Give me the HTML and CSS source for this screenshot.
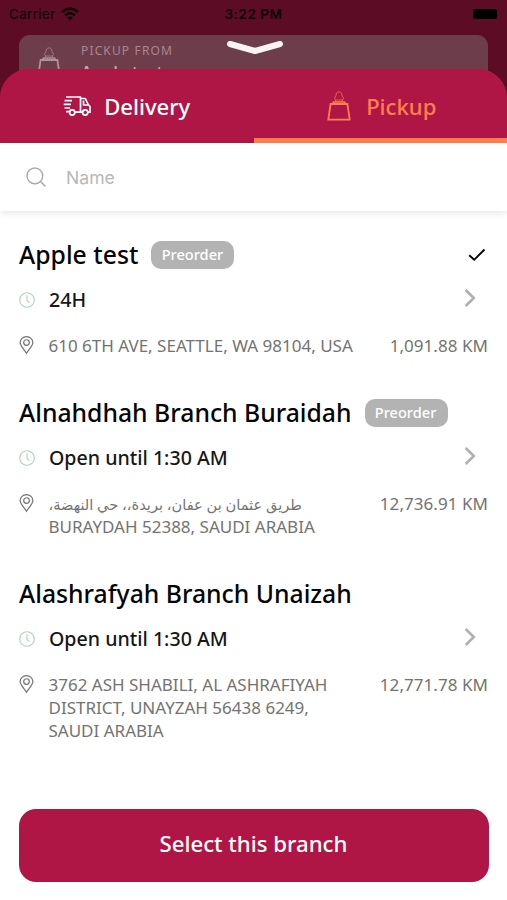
FILE: index.html
```html
<!DOCTYPE html>
<html lang="en">
<head>
<meta charset="utf-8">
<title>Choose a branch</title>
<link rel="stylesheet" href="styles.css">
</head>
<body>
<svg class="defs" width="0" height="0">
  <symbol id="bag" viewBox="0 0 24 30"><path d="M3.6 13H20.4L22.7 28.6H1.3Z" stroke-width="1.8"/><path d="M5.5 12.5L6.5 11H17.5L18.5 12.5" stroke-width="1.4"/><path d="M8.5 10.5V9L7.5 7L9 4.5L9.5 2L11 1H13L14.5 2L15 4.5L16.5 7L15.5 9V10.5M8.5 9H15.5" stroke-width=".9" opacity=".75"/></symbol>
  <symbol id="clock" viewBox="0 0 16 16"><circle cx="8" cy="8" r="7.3"/><path d="M8 3.2V8.3L10.4 11"/></symbol>
  <symbol id="pin" viewBox="0 0 16 20"><path d="M8 18.8C6 15.2 1.2 11.2 1.2 7.4A6.8 6.4 0 0 1 14.8 7.4C14.8 11.2 10 15.2 8 18.8Z"/><circle cx="8" cy="7.4" r="3"/></symbol>
  <symbol id="chevron" viewBox="0 0 12 20"><path d="M1.7 2L9.8 10L1.7 18"/></symbol>
</svg>
<div class="screen">
  <header class="status">
    <div class="carrier">Carrier
      <svg class="wifi" viewBox="0 0 18 14"><path d="M1 5.2C5.5.5 12.5.5 17 5.2M4 8.4C6.8 5.5 11.2 5.5 14 8.4" fill="none" stroke="#0b0206" stroke-width="2.6"/><path d="M6.2 10.6Q9 8.2 11.8 10.6L9 13.5Z" fill="#0b0206"/></svg>
    </div>
    <div class="time">3:22 PM</div>
    <div class="battery"></div>
  </header>
  <div class="pickup-card">
    <svg class="bag"><use href="#bag"/></svg>
    <div><div class="caption">PICKUP FROM</div><div class="current">Apple test</div></div>
  </div>
  <svg class="handle" viewBox="0 0 58 16"><path d="M4 4L29 11L54 4"/></svg>
  <main class="sheet">
    <nav class="tabs">
      <div class="tab">
        <svg class="truck" viewBox="0 0 28 20"><path d="M3 1H17.5V16.2H12M17.5 2.5H22.3L25.2 8.5L27 10.5V16.2H25M19.8 16.2H17.5M20.5 4.5V9H25M1.5 4.7H9M.7 8.3H8M1.5 12H7M3 15.7H6"/><circle cx="9.2" cy="16.5" r="2.6"/><circle cx="22.2" cy="16.5" r="2.6"/></svg>
        <span>Delivery</span>
      </div>
      <div class="tab active"><svg class="bag"><use href="#bag"/></svg><span>Pickup</span></div>
    </nav>
    <div class="search">
      <svg viewBox="0 0 22 22"><circle cx="9.3" cy="9.3" r="8.2"/><path d="M15.2 15.2L20.3 20.3"/></svg>
      <span>Name</span>
    </div>
    <div class="list">
      <section class="branch">
        <div class="title"><h2>Apple test</h2><span class="badge">Preorder</span><svg class="check" viewBox="0 0 18 14"><path d="M1.2 7.2L6.2 11.8L16.5 1.5"/></svg></div>
        <div class="hours"><svg class="clock"><use href="#clock"/></svg><span>24H</span><svg class="chevron"><use href="#chevron"/></svg></div>
        <div class="place"><svg class="pin"><use href="#pin"/></svg><p>610 6TH AVE, SEATTLE, WA 98104, USA</p><span class="distance">1,091.88 KM</span></div>
      </section>
      <section class="branch">
        <div class="title"><h2>Alnahdhah Branch Buraidah</h2><span class="badge">Preorder</span></div>
        <div class="hours"><svg class="clock"><use href="#clock"/></svg><span>Open until 1:30 AM</span><svg class="chevron"><use href="#chevron"/></svg></div>
        <div class="place"><svg class="pin"><use href="#pin"/></svg><p><bdi class="arabic" dir="rtl" lang="ar">طريق عثمان بن عفان، بريدة،، حي النهضة،</bdi><br>BURAYDAH 52388, SAUDI ARABIA</p><span class="distance">12,736.91 KM</span></div>
      </section>
      <section class="branch">
        <div class="title"><h2>Alashrafyah Branch Unaizah</h2></div>
        <div class="hours"><svg class="clock"><use href="#clock"/></svg><span>Open until 1:30 AM</span><svg class="chevron"><use href="#chevron"/></svg></div>
        <div class="place"><svg class="pin"><use href="#pin"/></svg><p>3762 ASH SHABILI, AL ASHRAFIYAH<br>DISTRICT, UNAYZAH 56438 6249,<br>SAUDI ARABIA</p><span class="distance">12,771.78 KM</span></div>
      </section>
    </div>
    <button class="select">Select this branch</button>
  </main>
</div>
</body>
</html>
```
FILE: styles.css
```css
* { box-sizing: border-box; }
body { margin: 0; font-family: "Noto Sans", "DejaVu Sans", sans-serif; }
h2, p { margin: 0; }
svg { display: block; flex: none; fill: none; }
.defs { position: absolute; }
.screen { position: relative; width: 507px; height: 900px; overflow: hidden; background: #5d0c25; display: flex; flex-direction: column; }
.status { flex: none; height: 35px; padding: 4px 9px 11px; display: grid; grid-template-columns: 1fr auto 1fr; align-items: center; font: 13.5px/20px Inter, sans-serif; color: #0b0206; }
.carrier { display: flex; align-items: center; gap: 6px; letter-spacing: .3px; }
.wifi { width: 18px; height: 14px; }
.time { font-weight: 600; letter-spacing: .55px; }
.battery { justify-self: end; width: 24px; height: 10px; margin-right: 1px; border-radius: 2px; background: #000; }
.pickup-card { flex: none; height: 60px; margin: 0 19px; padding: 6px 18px; border-radius: 11px; background: #6e3d4b; display: flex; gap: 20px; color: #a68791; overflow: hidden; }
.pickup-card .bag { width: 24px; height: 30px; margin-top: 6px; stroke: #ad929b; }
.caption { font-size: 12px; line-height: 20px; letter-spacing: 1.15px; }
.current { font-size: 17px; line-height: 24px; margin-top: -1px; font-weight: 500; color: #c4afb6; }
.handle { position: absolute; left: 226px; top: 40px; width: 58px; height: 16px; stroke: #f8f3f5; stroke-width: 6; stroke-linecap: round; stroke-linejoin: round; }
.sheet { position: relative; flex: 1; margin-top: -26px; border-radius: 29px 29px 0 0; background: linear-gradient(#b01645 60px, #fff 60px); display: flex; flex-direction: column; }
.tabs { flex: none; height: 74px; border-radius: 29px 29px 0 0; display: grid; grid-template-columns: 1fr 1fr; background: #b01645; color: #fff; font-size: 22.1px; font-weight: 500; }
.tab { display: flex; align-items: center; justify-content: center; gap: 13px; border-bottom: 5px solid transparent; padding-top: 4px; }
.tab.active { color: #ff804c; border-color: #ff804c; gap: 15px; padding-left: 3px; }
.tab .bag { width: 24px; height: 30px; stroke: #ff804c; }
.truck { width: 28px; height: 20px; stroke: #fff; stroke-width: 1.7; stroke-linejoin: round; }
.search { flex: none; height: 68px; padding: 1px 26px 0; display: flex; align-items: center; gap: 19px; font: 17.6px/24px Inter, sans-serif; color: #b8b8b8; box-shadow: 0 2px 7px rgba(0,0,0,.1); }
.search svg { width: 21px; height: 21px; stroke: #aaa; stroke-width: 1.5; }
.search span { padding-top: 1px; }
.list { flex: 1; padding: 27.4px 19px 0; display: flex; flex-direction: column; gap: 39px; }
.title { height: 34px; display: flex; align-items: center; gap: 13px; }
.title h2 { font-size: 24.75px; line-height: 34px; font-weight: 500; color: #050505; white-space: nowrap; }
.badge { width: 83px; height: 28px; border-radius: 10px; background: #b3b3b3; color: #fff; font-size: 14.6px; line-height: 27px; padding-right: 1px; text-align: center; font-weight: 500; }
.check { width: 18px; height: 14px; margin-left: auto; margin-right: 2px; stroke: #050505; stroke-width: 1.9; }
.hours { height: 28px; margin-top: 13.5px; display: flex; align-items: center; gap: 14px; font-size: 19.6px; line-height: 28px; font-weight: 500; color: #171717; }
.clock { width: 16px; height: 16px; stroke: #acd2b8; stroke-width: 1.1; }
.chevron { width: 12px; height: 20px; margin: 0 12px 3px auto; stroke: #b0b0b0; stroke-width: 2.6; }
.place { margin-top: 20px; display: flex; align-items: flex-start; font-size: 17px; line-height: 23.2px; color: #737373; white-space: nowrap; }
.arabic { font-size: 14.6px; line-height: 1; }
.pin { width: 15px; height: 20px; margin: 1px 15px 0 -.5px; stroke: #737373; stroke-width: 1.3; }
.distance { margin-left: auto; letter-spacing: .05px; }
.select { flex: none; height: 73px; margin: 0 18.5px 18.5px; padding: 0 0 3px; border: 0; border-radius: 17px; background: #b01645; color: #fff; font: 500 22.2px/30px "Noto Sans", sans-serif; }
```
